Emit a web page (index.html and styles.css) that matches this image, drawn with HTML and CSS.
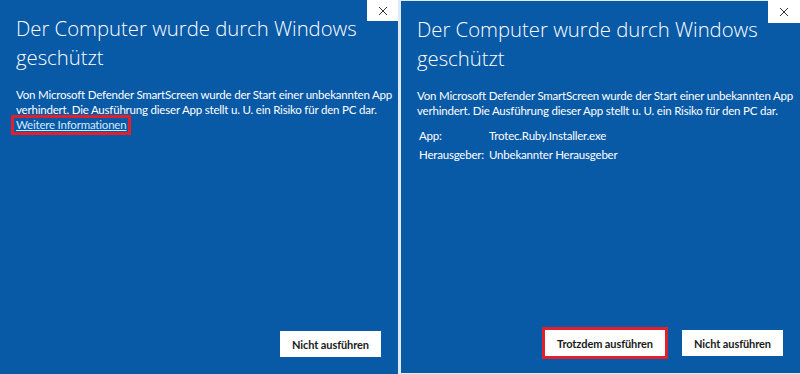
FILE: index.html
```html
<!DOCTYPE html>
<html lang="de">
<head>
    <meta charset="UTF-8">
    <meta name="viewport" content="width=device-width, initial-scale=1.0">
    <title>Windows SmartScreen</title>
    <link rel="stylesheet" href="styles.css">
</head>
<body>

    <!-- Erster Schritt: Dialog mit Link -->
    <div class="dialog dialog-left">
        <div class="close-box">
            <svg width="10" height="10" viewBox="0 0 10 10"><path d="M1 1L9 9M9 1L1 9" stroke="#333" stroke-width="1"/></svg>
        </div>
        <h1 class="title">Der Computer wurde durch Windows<br>geschützt</h1>
        <p class="text">Von Microsoft Defender SmartScreen wurde der Start einer unbekannten App<br>verhindert. Die Ausführung dieser App stellt u. U. ein Risiko für den PC dar.</p>
        <div class="more"><a href="#" class="more-link">Weitere Informationen</a></div>
        <div class="footer">
            <button class="btn">Nicht ausführen</button>
        </div>
    </div>

    <!-- Zweiter Schritt: Details und Trotzdem ausführen -->
    <div class="dialog dialog-right">
        <div class="close-box">
            <svg width="10" height="10" viewBox="0 0 10 10"><path d="M1 1L9 9M9 1L1 9" stroke="#333" stroke-width="1"/></svg>
        </div>
        <h1 class="title">Der Computer wurde durch Windows<br>geschützt</h1>
        <p class="text">Von Microsoft Defender SmartScreen wurde der Start einer unbekannten App<br>verhindert. Die Ausführung dieser App stellt u. U. ein Risiko für den PC dar.</p>
        <div class="details">
            <span>App:</span><span>Trotec.Ruby.Installer.exe</span>
            <span>Herausgeber:</span><span>Unbekannter Herausgeber</span>
        </div>
        <div class="footer">
            <button class="btn btn-marked">Trotzdem ausführen</button>
            <button class="btn">Nicht ausführen</button>
        </div>
    </div>

</body>
</html>
```

FILE: styles.css
```css
body {
    margin: 0;
    padding: 0;
    background-color: #dfeaf5;
    font-family: Lato, "Open Sans", sans-serif;
    display: flex;
    gap: 3px;
    height: 374px;
    overflow: hidden;
}

.dialog {
    position: relative;
    background-color: #0859a6;
    color: #fff;
    box-sizing: border-box;
    padding: 14px 17px 17px 16px;
    display: flex;
    flex-direction: column;
}

.dialog-left {
    width: 398px;
    height: 374px;
}

.dialog-right {
    width: 399px;
    height: 372px;
    margin-top: 1px;
}

.close-box {
    position: absolute;
    top: 0;
    right: 0;
    width: 31px;
    height: 21px;
    background-color: #fff;
    display: flex;
    align-items: center;
    justify-content: center;
}

.dialog-right .close-box {
    top: -1px;
    width: 32px;
    height: 23px;
}

.title {
    margin: 0;
    font-family: "Open Sans", sans-serif;
    font-size: 20.3px;
    font-weight: 300;
    line-height: 29px;
    white-space: nowrap;
}

.text {
    margin: 15px 0 0;
    font-size: 11.5px;
    letter-spacing: -0.2px;
    line-height: 15px;
    white-space: nowrap;
}

.more {
    margin-top: -4px;
}

.more-link {
    display: inline-block;
    margin-left: -5px;
    padding: 0 2px;
    border: 3px solid #e0202c;
    color: #d6e8ff;
    font-size: 11.5px;
    letter-spacing: -0.2px;
    line-height: 14px;
}

.details {
    margin-top: 8px;
    padding-left: 2px;
    display: grid;
    grid-template-columns: 70px auto;
    font-size: 11.5px;
    letter-spacing: -0.2px;
    line-height: 19px;
}

.footer {
    margin-top: auto;
    display: flex;
    justify-content: flex-end;
    gap: 17px;
}

.btn {
    height: 26px;
    width: 101px;
    padding: 0;
    background-color: #fff;
    color: #1a1a1a;
    font-family: inherit;
    font-size: 11px;
    font-weight: bold;
    letter-spacing: -0.1px;
    white-space: nowrap;
    border: none;
    cursor: pointer;
}

.btn-marked {
    width: 120px;
    outline: 3px solid #e0202c;
}
```
